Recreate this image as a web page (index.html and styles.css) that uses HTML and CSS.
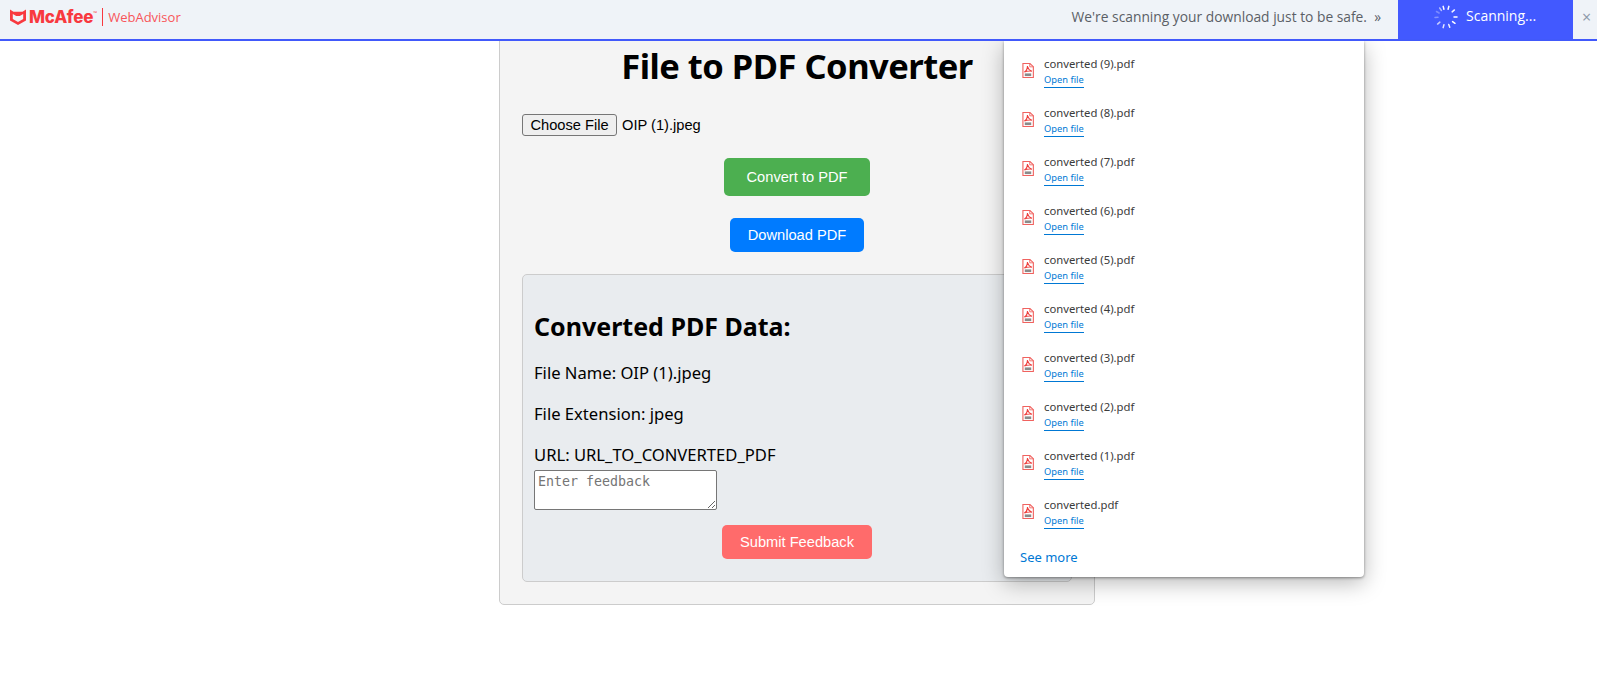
FILE: index.html
```html
<!DOCTYPE html>
<html lang="en">
<head>
  <meta charset="UTF-8">
  <meta name="viewport" content="width=device-width, initial-scale=1.0">
  <title>File to PDF Converter</title>
  <link rel="stylesheet" href="styles.css">
</head>
<body>
  <svg class="defs" width="0" height="0">
    <symbol id="pdf" viewBox="0 0 13 18" preserveAspectRatio="none">
      <path d="M1 .7h7.6L12.3 4.4V17.3H1z" fill="#fff" stroke="#f0625f" stroke-width="1.2"/>
      <path d="M8.4 .7V4.6h3.9" fill="none" stroke="#f0625f" stroke-width="1"/>
      <path d="M2.5 10.8C4.5 9.8 5.800 7.500 6 3.600C6.600 7.200 8 9 10.800 9.800C8 9.500 5 9.700 2.500 10.800Z" fill="none" stroke="#ee3e3c" stroke-width="1.300"/>
      <rect x="3" y="12.500" width="7" height="3.200" fill="#8a8a8a"/>
    </symbol>
  </svg>

  <div class="topbar">
    <svg class="shield" viewBox="0 0 16 17">
      <path d="M0 1.500L3.500 3.800H12.500L16 1.500V12.500L8 17L0 12.500ZM2.800 6V11L8 14L13.200 11V6L9.800 8H6.200Z" fill="#f8393f" fill-rule="evenodd"/>
    </svg>
    <span class="brand">McAfee</span>
    <span class="tm">™</span>
    <span class="brand-product">WebAdvisor</span>
    <span class="bar-msg">We're scanning your download just to be safe. &nbsp;»</span>
    <div class="scan-btn">
      <svg class="spinner" viewBox="-12 -12 24 24">
        <g stroke="#fff" stroke-width="1.500" stroke-linecap="round">
          <line x1="0" y1="-11" x2="0" y2="-8" transform="rotate(-15)"/>
          <line x1="0" y1="-11" x2="0" y2="-8" transform="rotate(15)"/>
          <line x1="0" y1="-11" x2="0" y2="-8" transform="rotate(50)" opacity=".95"/>
          <line x1="0" y1="-11" x2="0" y2="-8" transform="rotate(90)"/>
          <line x1="0" y1="-11" x2="0" y2="-8" transform="rotate(125)"/>
          <line x1="0" y1="-11" x2="0" y2="-8" transform="rotate(160)" opacity=".9"/>
          <line x1="0" y1="-11" x2="0" y2="-8" transform="rotate(195)" opacity=".85"/>
          <line x1="0" y1="-11" x2="0" y2="-8" transform="rotate(230)" opacity=".7"/>
          <line x1="0" y1="-11" x2="0" y2="-8" transform="rotate(268)" opacity=".35"/>
          <line x1="0" y1="-11" x2="0" y2="-8" transform="rotate(300)" opacity=".3"/>
          <line x1="0" y1="-11" x2="0" y2="-8" transform="rotate(325)" opacity=".6"/>
        </g>
      </svg>
      <span>Scanning...</span>
    </div>
    <span class="bar-close">×</span>
  </div>

  <div class="page">
    <div class="card">
      <h1>File to PDF Converter</h1>
      <div class="file-row">
        <button class="choose">Choose File</button>
        <span>OIP (1).jpeg</span>
      </div>
      <div class="actions">
        <button class="btn btn-green">Convert to PDF</button>
        <button class="btn btn-blue">Download PDF</button>
      </div>
      <div class="panel">
        <h3>Converted PDF Data:</h3>
        <p>File Name: OIP (1).jpeg</p>
        <p>File Extension: jpeg</p>
        <p class="last">URL: URL_TO_CONVERTED_PDF</p>
        <textarea placeholder="Enter feedback"></textarea>
        <div class="submit-row">
          <button class="btn btn-red">Submit Feedback</button>
        </div>
      </div>
    </div>
  </div>

  <div class="downloads">
    <div class="dl-item">
      <svg class="dl-icon"><use href="#pdf"/></svg>
      <div><div class="dl-name">converted (9).pdf</div><a class="dl-open">Open file</a></div>
    </div>
    <div class="dl-item">
      <svg class="dl-icon"><use href="#pdf"/></svg>
      <div><div class="dl-name">converted (8).pdf</div><a class="dl-open">Open file</a></div>
    </div>
    <div class="dl-item">
      <svg class="dl-icon"><use href="#pdf"/></svg>
      <div><div class="dl-name">converted (7).pdf</div><a class="dl-open">Open file</a></div>
    </div>
    <div class="dl-item">
      <svg class="dl-icon"><use href="#pdf"/></svg>
      <div><div class="dl-name">converted (6).pdf</div><a class="dl-open">Open file</a></div>
    </div>
    <div class="dl-item">
      <svg class="dl-icon"><use href="#pdf"/></svg>
      <div><div class="dl-name">converted (5).pdf</div><a class="dl-open">Open file</a></div>
    </div>
    <div class="dl-item">
      <svg class="dl-icon"><use href="#pdf"/></svg>
      <div><div class="dl-name">converted (4).pdf</div><a class="dl-open">Open file</a></div>
    </div>
    <div class="dl-item">
      <svg class="dl-icon"><use href="#pdf"/></svg>
      <div><div class="dl-name">converted (3).pdf</div><a class="dl-open">Open file</a></div>
    </div>
    <div class="dl-item">
      <svg class="dl-icon"><use href="#pdf"/></svg>
      <div><div class="dl-name">converted (2).pdf</div><a class="dl-open">Open file</a></div>
    </div>
    <div class="dl-item">
      <svg class="dl-icon"><use href="#pdf"/></svg>
      <div><div class="dl-name">converted (1).pdf</div><a class="dl-open">Open file</a></div>
    </div>
    <div class="dl-item">
      <svg class="dl-icon"><use href="#pdf"/></svg>
      <div><div class="dl-name">converted.pdf</div><a class="dl-open">Open file</a></div>
    </div>
    <a class="dl-more">See more</a>
  </div>
</body>
</html>
```

FILE: styles.css
```css
html, body { margin: 0; padding: 0; background: #fff; overflow: hidden; }
body { font-family: "Liberation Sans", Arial, sans-serif; font-size: 14.67px; color: #000; height: 682px; }
.defs { position: absolute; }

/* top notification bar, sits over the page */
.topbar { position: fixed; top: 0; left: 0; right: 0; height: 39px; box-sizing: content-box; z-index: 10; display: flex; align-items: center; padding-bottom: 0; background: #eff3f8; border-bottom: 2px solid #4159fb; font-family: "Open Sans", sans-serif; }
.shield { width: 16px; height: 17px; margin: -7px 3px 0 10px; flex: none; }
.brand { font-family: "Inter", sans-serif; font-weight: 800; font-size: 17px; color: #f8393f; letter-spacing: -.2px; margin-top: -6px; }
.tm { font-size: 5px; color: #f8393f; margin: -14px 0 0 0; }
.brand-product { font-size: 13px; color: #f8555a; margin: -6px 0 0 5px; padding-left: 5px; border-left: 1px solid #f8393f; line-height: 18px; }
.bar-msg { font-size: 13.8px; color: #5b5f66; margin: -6px 17px 0 auto; flex: none; }
.scan-btn { width: 175px; height: 39px; flex: none; background: #4259ff; color: #fff; font-size: 14px; display: flex; align-items: center; box-sizing: border-box; padding: 0 0 8px 68px; position: relative; }
.spinner { position: absolute; left: 36px; top: 5px; width: 24px; height: 24px; }
.bar-close { width: 24px; flex: none; box-sizing: border-box; padding-left: 9px; font-size: 16px; color: #8b98a8; margin-top: -5px; }

/* page */
.page { display: flex; justify-content: center; padding-right: 3px; }
.card { width: 596px; box-sizing: border-box; margin-top: 20px; padding: 22px; background: #f4f4f4; border: 1px solid #ccc; border-radius: 5px; }
h1 { font-family: "Noto Sans", sans-serif; font-weight: 700; font-size: 34.5px; letter-spacing: -.5px; line-height: 48px; text-align: center; margin: -1px 0 0; }
.file-row { display: flex; align-items: center; gap: 5px; margin-top: 24px; height: 22px; }
.choose { font: 14.67px "Liberation Sans", Arial, sans-serif; height: 22px; width: 95px; padding: 0; background: #efefef; border: 1px solid #767676; border-radius: 3px; color: #000; }
.actions { display: flex; flex-direction: column; align-items: center; margin-top: 22px; gap: 22px; }
.btn { font: 14.67px "Liberation Sans", Arial, sans-serif; color: #fff; border: 0; border-radius: 5px; padding: 0; height: 34px; display: block; }
.btn-green { background: #4caf50; width: 146px; height: 38px; }
.btn-blue { background: #007bff; width: 134px; }
.btn-red { background: #ff6b6b; width: 150px; }
.panel { margin-top: 22px; height: 308px; box-sizing: border-box; padding: 0 11px; background: #e9ecef; border: 1px solid #ccc; border-radius: 5px; }
h3 { font-family: "Noto Sans", sans-serif; font-weight: 700; font-size: 25px; line-height: 32px; margin: 35px 0 0; }
.panel p { font-family: "Noto Sans", sans-serif; font-size: 16.6px; line-height: 24px; margin: 17px 0 0; }
.panel p:first-of-type { margin-top: 19px; }
textarea { display: block; box-sizing: border-box; width: 183px; height: 40px; margin: 3px 0 0; padding: 3px; font: 13.3px "DejaVu Sans Mono", monospace; border: 1px solid #767676; border-radius: 2px; background: #fff; }
.submit-row { display: flex; justify-content: center; margin-top: 15px; }

/* downloads dropdown */
.downloads { position: absolute; left: 1004px; top: 41px; width: 360px; height: 536px; box-sizing: border-box; padding-top: 7px; background: #fff; border-radius: 0 0 4px 4px; box-shadow: 0 1px 3px rgba(0,0,0,.4), 0 6px 22px rgba(0,0,0,.28); font-family: "Noto Sans", sans-serif; z-index: 5; }
.dl-item { display: flex; align-items: flex-start; height: 49px; padding: 9px 0 0 18px; box-sizing: border-box; }
.dl-icon { width: 12px; height: 15px; margin: 6px 10px 0 0; flex: none; }
.dl-name { font-size: 11.3px; line-height: 14px; color: #3b3b3b; }
.dl-open { display: block; width: fit-content; font-size: 9.3px; line-height: 13px; color: #0078d4; border-bottom: 1px solid #0078d4; padding-bottom: 1px; margin-top: 2px; }
.dl-more { display: block; margin: 10px 0 0 16px; font-size: 13px; line-height: 18px; color: #0078d4; }
```
